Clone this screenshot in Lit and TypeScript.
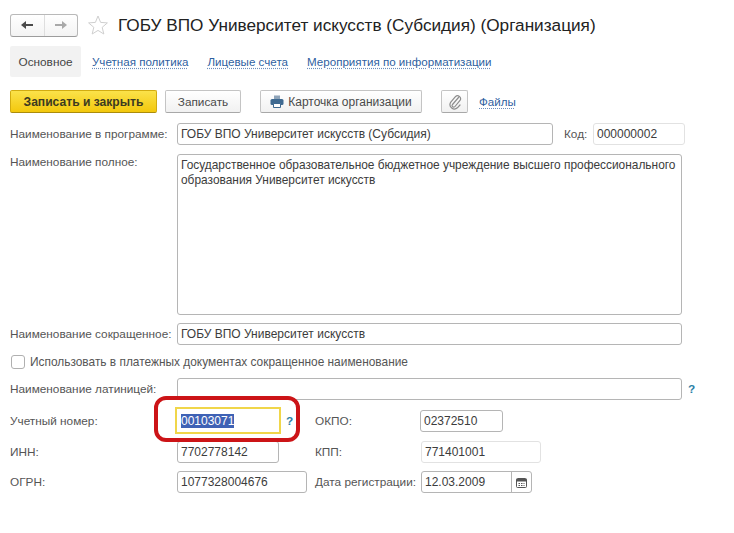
import { LitElement, html, css } from "lit";
import { customElement } from "lit/decorators.js";

@customElement("app-root")
export class AppRoot extends LitElement {
  static styles = css`
    :host { display: block; width: 734px; height: 533px; background: #fff; overflow: hidden; position: relative;
      font: 11.8px "Liberation Sans", Arial, sans-serif; color: #555; }
    * { box-sizing: border-box; }
    .page { padding: 14px 0 0 10px; display: flex; flex-direction: column; }
    .head { display: flex; align-items: center; height: 22px; }
    .nav { display: flex; width: 68px; height: 23px; border: 1px solid #b9b9b9; border-bottom-color: #9c9c9c; border-radius: 3px; background: linear-gradient(#fff, #f3f3f3); }
    .nav div { flex: 1; display: flex; align-items: center; justify-content: center; }
    .nav div + div { border-left: 1px solid #dedede; }
    .star { margin-left: 10px; display: block; }
    h1 { margin: 0 0 0 10px; font-size: 17.2px; font-weight: 400; color: #222; white-space: nowrap; }
    .tabs { display: flex; align-items: center; margin-top: 10px; height: 31px; }
    .tab { height: 31px; width: 71px; background: #f2f2f2; border-radius: 2px; display: flex; align-items: center; justify-content: center; color: #444; }
    .link { color: #2f5f9f; font-size: 11.6px; text-decoration: underline dotted #6d8fbd; text-underline-offset: 2px; white-space: nowrap; }
    .tabs .link { margin-left: 11px; margin-right: 8px; }
    .tools { display: flex; align-items: center; margin-top: 13px; height: 23px; }
    .btn { height: 23px; border: 1px solid #c4c4c4; border-bottom-color: #a8a8a8; border-radius: 2px; background: linear-gradient(#fff, #f1f1f1); display: flex; align-items: center; justify-content: center; gap: 4px; color: #4a4a4a; white-space: nowrap; }
    .primary { width: 147px; background: linear-gradient(#fbe24a, #f3c80d); border-color: #d2ac10; border-bottom-color: #ab8c0c; font-size: 12.1px; font-weight: 700; color: #3d3a20; }
    .save { width: 76px; margin-left: 8px; }
    .card { width: 162px; margin-left: 19px; font-size: 12px; }
    .clip { width: 27px; margin-left: 19px; }
    .files { margin-left: 11px; }
    .row { display: flex; align-items: center; }
    .label { width: 167px; flex: none; white-space: nowrap; }
    .input { height: 22px; border: 1px solid #b5b5b5; border-radius: 3px; background: #fff; padding: 0 3px; display: flex; align-items: center; color: #3c3c3c; font-size: 12px; white-space: nowrap; flex: none; }
    .soft { border-color: #e2e2e2; }
    .r1 { margin-top: 10px; }
    .r2 { margin-top: 9px; align-items: flex-start; }
    .r2 .label { padding-top: 1px; }
    .r3 { margin-top: 8px; }
    .r4 { margin-top: 10px; height: 13px; font-size: 11.9px; }
    .r5 { margin-top: 10px; }
    .r6 { margin-top: 7px; height: 27px; }
    .r7 { margin-top: 7px; }
    .r8 { margin-top: 8px; }
    .area { width: 505px; height: 161px; align-items: flex-start; padding: 3px 3px; white-space: normal; line-height: 15px; font-size: 11.92px; }
    .w505 { width: 505px; }
    .check { width: 14px; height: 14px; border: 1px solid #b0b0b0; border-radius: 3px; margin: 0 5px 0 1px; background: #fff; }
    .help { color: #2b7fa6; font-weight: 700; margin-left: 6px; }
    .focus { margin-left: -2px; width: 106px; height: 27px; border: 2px solid #f0d64a; border-radius: 0; padding: 0 4px; }
    .sel { background: #3f62b5; color: #fff; }
    .after { margin-left: 0; width: 106px; flex: none; white-space: nowrap; }
    .cal { width: 111px; padding: 0; }
    .cal span { flex: 1; padding: 0 3px; }
    .cal i { width: 20px; height: 100%; border-left: 1px solid #b5b5b5; display: flex; align-items: center; justify-content: center; }
    .ring { position: absolute; left: 154px; top: 396px; width: 146px; height: 46px; border: 4px solid #cc1417; border-radius: 12px; pointer-events: none; }
  `;

  render() {
    return html`
      <div class="page">
        <div class="head">
          <div class="nav">
            <div><svg width="14" height="10" viewBox="0 0 14 10"><path d="M1 5 L6 1 V4 H13 V6 H6 V9 Z" fill="#4a4a4a"/></svg></div>
            <div><svg width="14" height="10" viewBox="0 0 14 10"><path d="M13 5 L8 1 V4 H1 V6 H8 V9 Z" fill="#a9a9a9"/></svg></div>
          </div>
          <svg class="star" width="20" height="20" viewBox="0 0 20 20"><path d="M10 1 L12.6 7.4 L19.4 7.9 L14.2 12.3 L15.8 19 L10 15.4 L4.2 19 L5.8 12.3 L.6 7.9 L7.4 7.4 Z" fill="#fff" stroke="#cfcfcf"/></svg>
          <h1>ГОБУ ВПО Университет искусств (Субсидия) (Организация)</h1>
        </div>
        <div class="tabs">
          <div class="tab">Основное</div>
          <span class="link">Учетная политика</span>
          <span class="link">Лицевые счета</span>
          <span class="link">Мероприятия по информатизации</span>
        </div>
        <div class="tools">
          <div class="btn primary">Записать и закрыть</div>
          <div class="btn save">Записать</div>
          <div class="btn card">
            <svg width="14" height="13" viewBox="0 0 14 13"><path d="M4 0.5h6v3.5H4z" fill="#8ea3b8"/><rect x="0.5" y="4" width="13" height="6" rx="1.5" fill="#3f6a91"/><path d="M3.5 8.5h7v4h-7z" fill="#fff" stroke="#3f6a91"/></svg>
            Карточка организации
          </div>
          <div class="btn clip">
            <svg width="14" height="16" viewBox="0 0 14 16"><path d="M10.5 3.5 L4.5 10.5 a1.6 1.6 0 0 0 2.5 2 L12 6.5 a3 3 0 0 0 -4.6 -3.8 L2.6 8.4 a4.4 4.4 0 0 0 6.8 5.4 L12 11" fill="none" stroke="#8d8d8d" stroke-width="1.2" stroke-linecap="round"/></svg>
          </div>
          <span class="link files">Файлы</span>
        </div>
        <div class="row r1">
          <div class="label">Наименование в программе:</div>
          <div class="input" style="width:376px">ГОБУ ВПО Университет искусств (Субсидия)</div>
          <span style="margin-left:11px;width:29px">Код:</span>
          <div class="input soft" style="width:92px">000000002</div>
        </div>
        <div class="row r2">
          <div class="label">Наименование полное:</div>
          <div class="input area">Государственное образовательное бюджетное учреждение высшего профессионального образования Университет искусств</div>
        </div>
        <div class="row r3">
          <div class="label">Наименование сокращенное:</div>
          <div class="input w505">ГОБУ ВПО Университет искусств</div>
        </div>
        <div class="row r4">
          <div class="check"></div>
          <span>Использовать в платежных документах сокращенное наименование</span>
        </div>
        <div class="row r5">
          <div class="label">Наименование латиницей:</div>
          <div class="input w505"></div>
          <span class="help">?</span>
        </div>
        <div class="row r6">
          <div class="label">Учетный номер:</div>
          <div class="input focus"><span class="sel">00103071</span></div>
          <span class="help" style="margin-left:5px;width:29px">?</span>
          <span class="after" style="width:105px">ОКПО:</span>
          <div class="input" style="width:83px">02372510</div>
        </div>
        <div class="row r7">
          <div class="label">ИНН:</div>
          <div class="input" style="width:102px">7702778142</div>
          <span class="after" style="margin-left:36px;width:106px">КПП:</span>
          <div class="input soft" style="width:120px">771401001</div>
        </div>
        <div class="row r8">
          <div class="label">ОГРН:</div>
          <div class="input" style="width:130px">1077328004676</div>
          <span class="after" style="margin-left:8px">Дата регистрации:</span>
          <div class="input cal"><span>12.03.2009</span><i><svg width="11" height="11" viewBox="0 0 11 11"><rect x="0.5" y="1.5" width="10" height="9" rx="1" fill="none" stroke="#555"/><path d="M0.5 2h10v2.5h-10z" fill="#555"/><path d="M2.5 6.5h1.5M5 6.5h1.5M7.5 6.5h1M2.5 8.5h1.5M5 8.5h1.5M7.5 8.5h1" stroke="#555"/></svg></i></div>
        </div>
      </div>
      <div class="ring"></div>
    `;
  }
}
